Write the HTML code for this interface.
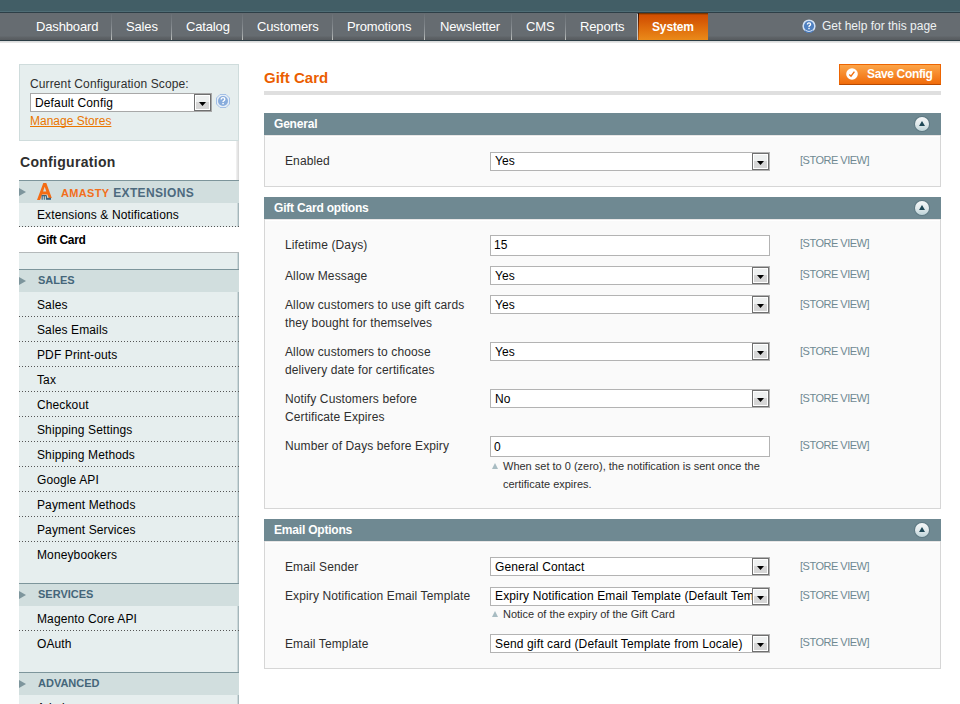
<!DOCTYPE html>
<html><head><meta charset="utf-8">
<style>
*{margin:0;padding:0;box-sizing:border-box}
html,body{width:960px;height:704px;overflow:hidden;background:#fff}
body{font-family:"Liberation Sans",sans-serif;font-size:12px;color:#2f2f2f;position:relative}
.a{position:absolute;white-space:nowrap}
.t12{font-size:12px;line-height:14px}
.t13{font-size:13px;line-height:15px}
.t11{font-size:11px;line-height:12px}
.t14{font-size:14px;line-height:16px}
.b{font-weight:bold}
/* header */
#band{left:0;top:0;width:960px;height:11px;background:#425e66}
#band2{left:0;top:11px;width:960px;height:1px;background:#4f6d76}
#band3{left:0;top:12px;width:960px;height:1px;background:#2d3f47}
#nav{left:0;top:13px;width:960px;height:27px;background:linear-gradient(#666c71 0,#666c71 23px,#5f6468 24px,#575b5f 27px)}
#nav2{left:0;top:40px;width:960px;height:1px;background:#2b3d45}
#nav3{left:0;top:41px;width:960px;height:2px;background:linear-gradient(#d4d6d7,#ececec)}
.sep{top:14px;width:1px;height:26px;background:linear-gradient(#6a7075,#7d8388 40%,#9a9fa2 75%,#bfc3bf)}
.nv{top:19px;color:#fff;letter-spacing:-.15px}
#sys{left:638px;top:13px;width:70px;height:27px;background:linear-gradient(#7a3500 0,#7a3500 1px,#b54600 1px,#b54600 2px,#d24f02 2px,#d65a06 8px,#e2740f 18px,#ea8a1a 27px)}
#sysb{left:638px;top:13px;width:1px;height:27px;background:linear-gradient(#2a0a00,#7a2a00 40%,#d06a10 100%)}
/* main */
.fhead{left:264px;width:677px;height:22px;background:#6f8992}
.fhead span{position:absolute;left:10px;top:4px;color:#fff;font-weight:bold;font-size:12px;line-height:14px;letter-spacing:-.2px}
.fbody{left:264px;width:677px;background:#fafafa;border:1px solid #d6d6d6;border-top:0;box-shadow:inset 0 1px 0 #e8e6e6,inset 0 2px 0 #fff}
.lbl{left:285px;color:#2f2f2f;line-height:18px;font-size:12px;letter-spacing:.12px}
.sv{left:800px;color:#6f8992;font-size:11px;line-height:12px;letter-spacing:-.5px}
.sel{left:490px;width:280px;height:19px;background:#fff;border:1px solid #b3b3b3}
.sel .v{position:absolute;left:4px;top:2px;color:#000;font-size:12px;line-height:14px;letter-spacing:.14px;white-space:nowrap;overflow:hidden;width:257px}
.ddb{position:absolute;right:0;top:0;width:17px;height:17px;border:1px solid #707070;background:#fff}
.ddb i{position:absolute;left:1px;top:1px;width:13px;height:13px;background:linear-gradient(#eef0f0 0,#eef0f0 6px,#d6d6d6 6px)}
.ddb b{position:absolute;left:4px;top:7px;width:7px;height:4px;background:#000;clip-path:polygon(0 0,100% 0,50% 100%)}
.inp{left:490px;width:280px;height:21px;background:#fff;border:1px solid #b3b3b3}
.inp .v{position:absolute;left:3px;top:2px;color:#000;font-size:12px;line-height:14px}
.note{left:503px;font-size:11px;line-height:18px;color:#2f2f2f}
.ntri{width:0;height:0;border-left:3.5px solid transparent;border-right:3.5px solid transparent;border-bottom:6px solid #a8bcc2}
.col{left:915px;width:14px;height:14px;border-radius:50%;background:linear-gradient(#f4f7f8,#e2eaec 50%,#bdd3d8);box-shadow:0 0 0 1px rgba(70,100,110,.45)}
.col b{position:absolute;left:4px;top:4px;width:6px;height:5px;background:#1f4856;clip-path:polygon(50% 0,100% 100%,0 100%)}
/* sidebar */
.side-item{left:19px;width:220px;height:25px;background:#e6eeee;border-right:1px solid #a4b6ba;box-shadow:inset -1px 0 #cbd7d9}
.side-item span{position:absolute;left:18px;top:6px;font-size:12px;line-height:14px;color:#000;letter-spacing:.12px}
.dots{left:19px;width:220px;height:1px;background:repeating-linear-gradient(90deg,#555 0,#555 1px,transparent 1px,transparent 3px)}
.shead{left:19px;width:220px;height:23px;background:#d1dede;border-top:1px solid #7d959b}
.shead span{position:absolute;left:19px;top:4px;font-size:11px;line-height:12px;font-weight:bold;color:#45667a}
.shead i{position:absolute;left:0;top:7px;width:0;height:0;border-top:4px solid transparent;border-bottom:4px solid transparent;border-left:7px solid #7d959c}
.spad{left:19px;width:220px;background:#e6eeee;border-right:1px solid #a4b6ba;box-shadow:inset -1px 0 #cbd7d9}
</style></head><body>
<!-- header -->
<div class="a" id="band"></div><div class="a" id="band2"></div><div class="a" id="band3"></div>
<div class="a" id="nav"></div><div class="a" id="nav2"></div><div class="a" id="nav3"></div>
<div class="a" id="sys"></div><div class="a" id="sysb"></div>
<div class="a sep" style="left:111px"></div>
<div class="a sep" style="left:171px"></div>
<div class="a sep" style="left:242px"></div>
<div class="a sep" style="left:332px"></div>
<div class="a sep" style="left:424px"></div>
<div class="a sep" style="left:511px"></div>
<div class="a sep" style="left:565px"></div>
<div class="a sep" style="left:637px;background:#c5c8ca"></div>
<div class="a nv t13" style="left:36px">Dashboard</div>
<div class="a nv t13" style="left:126px">Sales</div>
<div class="a nv t13" style="left:186px">Catalog</div>
<div class="a nv t13" style="left:257px">Customers</div>
<div class="a nv t13" style="left:347px">Promotions</div>
<div class="a nv t13" style="left:440px">Newsletter</div>
<div class="a nv t13" style="left:526px">CMS</div>
<div class="a nv t13" style="left:580px">Reports</div>
<div class="a nv t12 b" style="left:652px;top:20px">System</div>
<svg class="a" style="left:802px;top:19px" width="14" height="14" viewBox="0 0 14 14"><circle cx="7" cy="7" r="6.6" fill="#d3e2f5"/><path d="M2.6,11.7 A6.4,6.4 0 0 0 11.4,11.7" fill="none" stroke="#3d70b6" stroke-width="1.1"/><circle cx="7" cy="7" r="5.1" fill="#4f80c0"/><path d="M5.4,5.6 Q5.4,3.9 7,3.9 Q8.6,3.9 8.6,5.3 Q8.6,6.2 7.6,6.7 Q7,7 7,7.9" fill="none" stroke="#fff" stroke-width="1.3"/><rect x="6.3" y="8.8" width="1.4" height="1.4" fill="#fff"/></svg>
<div class="a t12" style="left:822px;top:19px;color:#eef2f3">Get help for this page</div>

<!-- content header -->
<div class="a t14 b" style="left:264px;top:69px;color:#eb5e00;font-size:15px;line-height:17px">Gift Card</div>
<div class="a" style="left:264px;top:91px;width:677px;height:4px;background:#dfdfdf"></div>
<div class="a" style="left:839px;top:64px;width:102px;height:21px;border:1px solid #ed6502;border-bottom-color:#b84a00;background:linear-gradient(#fca549,#f06b0a)">
  <svg class="a" style="left:6px;top:3px" width="12" height="12" viewBox="0 0 12 12"><circle cx="6" cy="6" r="5.8" fill="#fff"/><path d="M3.3,6.6 L5,8.2 L8.4,3.6" fill="none" stroke="#f2700f" stroke-width="1.4"/></svg>
  <div class="a t12 b" style="left:27px;top:2px;color:#fff;letter-spacing:-.35px">Save Config</div>
</div>

<!-- fieldset General -->
<div class="a fhead" style="top:113px"><span>General</span></div>
<div class="a col" style="top:117px"><b></b></div>
<div class="a fbody" style="top:135px;height:52px"></div>
<div class="a lbl" style="top:152px">Enabled</div>
<div class="a sel" style="top:152px"><div class="v" style="top:1px">Yes</div><div class="ddb"><i></i><b></b></div></div>
<div class="a sv" style="top:154px">[STORE VIEW]</div>

<!-- fieldset Gift Card options -->
<div class="a fhead" style="top:197px"><span>Gift Card options</span></div>
<div class="a col" style="top:201px"><b></b></div>
<div class="a fbody" style="top:219px;height:290px"></div>
<div class="a lbl" style="top:236px">Lifetime (Days)</div>
<div class="a inp" style="top:235px"><div class="v">15</div></div>
<div class="a sv" style="top:237px">[STORE VIEW]</div>

<div class="a lbl" style="top:267px">Allow Message</div>
<div class="a sel" style="top:266px"><div class="v">Yes</div><div class="ddb"><i></i><b></b></div></div>
<div class="a sv" style="top:268px">[STORE VIEW]</div>

<div class="a lbl" style="top:296px">Allow customers to use gift cards<br>they bought for themselves</div>
<div class="a sel" style="top:295px"><div class="v">Yes</div><div class="ddb"><i></i><b></b></div></div>
<div class="a sv" style="top:298px">[STORE VIEW]</div>

<div class="a lbl" style="top:343px">Allow customers to choose<br>delivery date for certificates</div>
<div class="a sel" style="top:342px"><div class="v">Yes</div><div class="ddb"><i></i><b></b></div></div>
<div class="a sv" style="top:345px">[STORE VIEW]</div>

<div class="a lbl" style="top:390px">Notify Customers before<br>Certificate Expires</div>
<div class="a sel" style="top:389px"><div class="v">No</div><div class="ddb"><i></i><b></b></div></div>
<div class="a sv" style="top:392px">[STORE VIEW]</div>

<div class="a lbl" style="top:437px">Number of Days before Expiry</div>
<div class="a inp" style="top:436px"><div class="v" style="top:3px">0</div></div>
<div class="a sv" style="top:439px">[STORE VIEW]</div>
<div class="a ntri" style="left:492px;top:463px"></div>
<div class="a note" style="top:457px">When set to 0 (zero), the notification is sent once the<br>certificate expires.</div>

<!-- fieldset Email Options -->
<div class="a fhead" style="top:519px"><span>Email Options</span></div>
<div class="a col" style="top:523px"><b></b></div>
<div class="a fbody" style="top:541px;height:128px"></div>
<div class="a lbl" style="top:558px">Email Sender</div>
<div class="a sel" style="top:557px"><div class="v">General Contact</div><div class="ddb"><i></i><b></b></div></div>
<div class="a sv" style="top:560px">[STORE VIEW]</div>

<div class="a lbl" style="top:587px">Expiry Notification Email Template</div>
<div class="a sel" style="top:587px"><div class="v" style="top:1px">Expiry Notification Email Template (Default Template from Locale)</div><div class="ddb"><i></i><b></b></div></div>
<div class="a sv" style="top:589px">[STORE VIEW]</div>
<div class="a ntri" style="left:492px;top:611px"></div>
<div class="a note" style="top:605px">Notice of the expiry of the Gift Card</div>

<div class="a lbl" style="top:635px">Email Template</div>
<div class="a sel" style="top:634px"><div class="v">Send gift card (Default Template from Locale)</div><div class="ddb"><i></i><b></b></div></div>
<div class="a sv" style="top:636px">[STORE VIEW]</div>

<!-- sidebar -->
<div class="a" style="left:19px;top:64px;width:220px;height:77px;background:#e6eeee;border:1px solid #cfdcdc"></div>
<div class="a t12" style="left:30px;top:77px;color:#2f2f2f;letter-spacing:.12px">Current Configuration Scope:</div>
<div class="a" style="left:30px;top:93px;width:182px;height:19px;background:#fff;border:1px solid #a8a8a8">
  <div class="a t12" style="left:4px;top:2px;color:#000;letter-spacing:.14px">Default Config</div>
  <div class="ddb"><i></i><b></b></div>
</div>
<svg class="a" style="left:216px;top:94px" width="14" height="14" viewBox="0 0 14 14"><polygon points="4,0.5 10,0.5 13.5,4 13.5,10 10,13.5 4,13.5 0.5,10 0.5,4" fill="#e6eef6" stroke="#a3bfe6" stroke-width="1"/><circle cx="7" cy="7" r="5" fill="#88acdc"/><path d="M5.2,5.5 Q5.2,3.6 7,3.6 Q8.8,3.6 8.8,5.2 Q8.8,6.3 7.7,6.8 Q7,7.1 7,8" fill="none" stroke="#fff" stroke-width="1.4"/><rect x="6.3" y="8.9" width="1.5" height="1.4" fill="#fff"/></svg>
<div class="a t12" style="left:30px;top:114px;color:#ea7601;text-decoration:underline;text-decoration-skip-ink:none">Manage Stores</div>

<div class="a" style="left:236px;top:141px;width:3px;height:39px;background:linear-gradient(90deg,#f4f4f4,#d6d6d6)"></div>
<div class="a t14 b" style="left:20px;top:154px;color:#2f2f2f;letter-spacing:.3px">Configuration</div>

<div class="a shead" style="top:180px"><i></i><span style="left:42px;top:5px;font-size:12px;line-height:14px;color:#4d6a7e;letter-spacing:.35px"><span style="position:static;color:#f26f1c">AMASTY</span> EXTENSIONS</span></div>
<svg class="a" style="left:34px;top:181px" width="22" height="22" viewBox="0 0 22 22"><path fill-rule="evenodd" fill="#f46c14" d="M3,19 L9.3,2 L12.3,2 L17.8,17 L14.8,17 L13.4,13.4 L8.2,13.4 L6.1,19 Z M9.1,10.6 L12.3,10.6 L10.7,5.8 Z"/><path fill="#3e627a" d="M7.6,18.8 V14 H11.8 Q13,14 13,15.2 V18.8 H11.9 V15.2 H10.8 V18.8 H9.8 V15.2 H8.7 V18.8 Z"/><rect x="13" y="16.8" width="4" height="2" fill="#3e627a"/></svg>
<div class="a side-item" style="top:203px"><span style="top:5px">Extensions &amp; Notifications</span></div>
<div class="a dots" style="top:226px"></div>
<div class="a" style="left:19px;top:227px;width:220px;height:25px;background:#fff"><span class="a t12 b" style="left:18px;top:6px;color:#000;letter-spacing:-.3px">Gift Card</span></div>
<div class="a" style="left:19px;top:252px;width:220px;height:1px;background:#b5b9ba"></div>
<div class="a spad" style="top:253px;height:16px"></div>

<div class="a shead" style="top:269px"><i></i><span>SALES</span></div>
<div class="a side-item" style="top:292px"><span>Sales</span></div>
<div class="a side-item" style="top:317px"><span>Sales Emails</span></div>
<div class="a side-item" style="top:342px"><span>PDF Print-outs</span></div>
<div class="a side-item" style="top:367px"><span>Tax</span></div>
<div class="a side-item" style="top:392px"><span>Checkout</span></div>
<div class="a side-item" style="top:417px"><span>Shipping Settings</span></div>
<div class="a side-item" style="top:442px"><span>Shipping Methods</span></div>
<div class="a side-item" style="top:467px"><span>Google API</span></div>
<div class="a side-item" style="top:492px"><span>Payment Methods</span></div>
<div class="a side-item" style="top:517px"><span>Payment Services</span></div>
<div class="a side-item" style="top:542px"><span>Moneybookers</span></div>
<div class="a dots" style="top:316px"></div>
<div class="a dots" style="top:341px"></div>
<div class="a dots" style="top:366px"></div>
<div class="a dots" style="top:391px"></div>
<div class="a dots" style="top:416px"></div>
<div class="a dots" style="top:441px"></div>
<div class="a dots" style="top:466px"></div>
<div class="a dots" style="top:491px"></div>
<div class="a dots" style="top:516px"></div>
<div class="a dots" style="top:541px"></div>
<div class="a spad" style="top:567px;height:16px"></div>

<div class="a shead" style="top:583px"><i></i><span>SERVICES</span></div>
<div class="a side-item" style="top:606px"><span>Magento Core API</span></div>
<div class="a dots" style="top:630px"></div>
<div class="a side-item" style="top:631px"><span>OAuth</span></div>
<div class="a spad" style="top:656px;height:16px"></div>
<div class="a shead" style="top:672px"><i></i><span>ADVANCED</span></div>
<div class="a side-item" style="top:695px"><span>Admin</span></div>
</body></html>
